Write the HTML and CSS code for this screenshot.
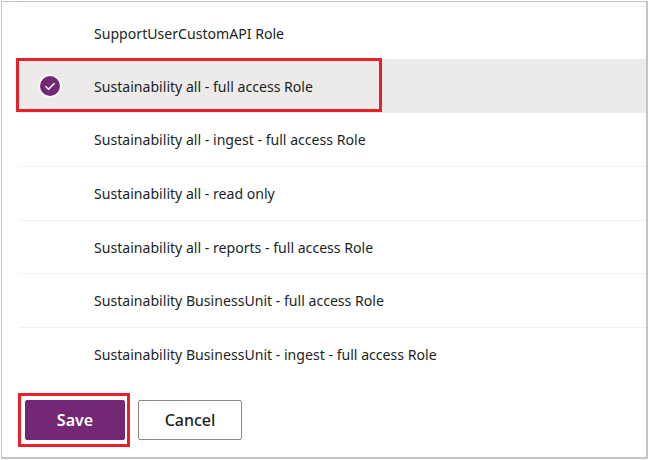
FILE: index.html
```html
<!DOCTYPE html>
<html lang="en">
<head>
<meta charset="utf-8">
<title>Roles</title>
<link rel="stylesheet" href="styles.css">
</head>
<body>
<main class="frame">
  <ul class="role-list">
    <li class="role first">SupportUserCustomAPI Role</li>
    <li class="role selected">
      <svg class="check" viewBox="0 0 24 24" width="24" height="24" aria-hidden="true">
        <circle cx="12" cy="12" r="11.5" fill="#fff"/>
        <circle cx="12" cy="12" r="10" fill="#742774"/>
        <path d="M7.4 12.2l3.1 3 6.1-6" fill="none" stroke="#fff" stroke-width="1.6"/>
      </svg>
      Sustainability all - full access Role
      <span class="callout callout-row"></span>
    </li>
    <li class="role">Sustainability all - ingest - full access Role</li>
    <li class="role">Sustainability all - read only</li>
    <li class="role">Sustainability all - reports - full access Role</li>
    <li class="role">Sustainability BusinessUnit - full access Role</li>
    <li class="role last">Sustainability BusinessUnit - ingest - full access Role</li>
  </ul>
  <div class="actions">
    <button class="btn primary">Save<span class="callout callout-save"></span></button>
    <button class="btn secondary">Cancel</button>
  </div>
</main>
</body>
</html>
```
FILE: styles.css
```css
* { box-sizing: border-box; }
html, body { margin: 0; padding: 0; background: #fff; }
body { padding: 1px; width: 649px; height: 460px; }
.frame {
  width: 647px;
  height: 458px;
  border: 1px solid #c4c4c4;
  border-right-width: 2px;
  border-bottom-width: 2px;
  padding-top: 4px;
  font-family: "Noto Sans", "Open Sans", sans-serif;
  color: #201f1e;
}
.role-list {
  list-style: none;
  margin: 0 0 0 17px;
  padding: 0;
  border-top: 1px solid #f3f2f1;
}
.role {
  position: relative;
  display: flex;
  align-items: center;
  height: 53.6px;
  padding: 0.6px 0 0 75px;
  font-size: 14.1px;
  border-bottom: 1px solid #f3f2f1;
}
.role.first { height: 52.2px; padding-top: 0; border-bottom: 0; }
.role.last { border-bottom: 0; }
.role.selected { height: 54.2px; padding-top: 1.4px; background: #edebe9; border-bottom-color: #edebe9; }
.check { position: absolute; left: 18.5px; top: 15px; }
.callout { position: absolute; border: 3px solid #e8202a; pointer-events: none; }
.callout-row { left: -3px; top: -1px; width: 366px; height: 54px; }
.actions { display: flex; gap: 13px; margin: 18.4px 0 0 23px; }
.btn {
  position: relative;
  width: 104px;
  height: 40px;
  background: #fff;
  border: 1px solid #8a8886;
  border-radius: 2px;
  font: 600 16px "Noto Sans", "Open Sans", sans-serif;
  color: #201f1e;
  padding: 0;
}
.btn.secondary { font-weight: 500; }
.btn.primary { width: 100px; background: #742774; border-color: #742774; color: #fff; }
.callout-save { left: -8px; top: -8px; width: 112px; height: 54px; }
```
